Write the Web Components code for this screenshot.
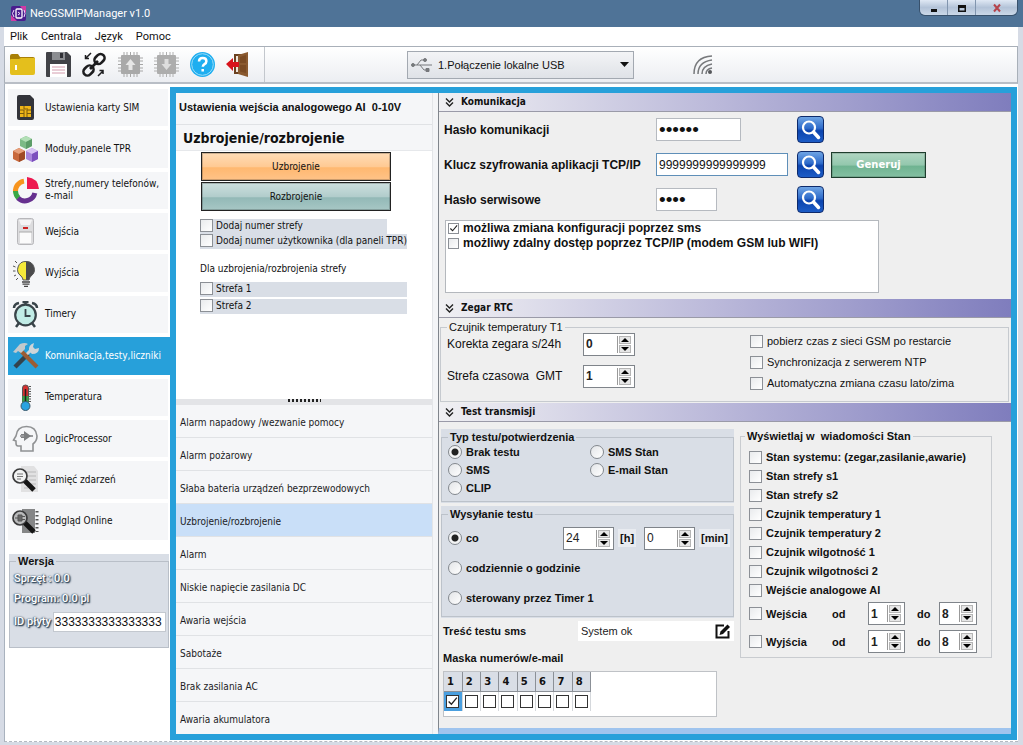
<!DOCTYPE html>
<html lang="pl">
<head>
<meta charset="utf-8">
<title>NeoGSMIPManager v1.0</title>
<style>
  html, body { margin: 0; }
  body {
    background: #d6dbe5;
    color: #111;
    font: 10px/12px "DejaVu Sans Condensed", "DejaVu Sans", sans-serif;
    --arial: "Liberation Sans", Arial, sans-serif;
    --blue: #27a0da;
    --panel: #d9dee6;
  }
</style>
</head>
<body>
<app-window></app-window>

<template id="app-window">
  <style>
    :host { display: flex; flex-direction: column; min-height: 100vh; }
    main { flex: 1; display: flex; margin: 0 5px 3px 4px; border-left: 1px solid #a9b2be; border-bottom: 1px dashed #b4bac2; background: #fff; padding-bottom: 1px; }
    .side { flex: none; width: 165px; display: flex; flex-direction: column; padding-top: 5px; box-sizing: border-box; }
    .frame { flex: 1; min-width: 0; display: flex; border: 6px solid var(--blue); margin-top: 3px; margin-right: 1px; background: #f4f5f7; }
    .left { flex: none; width: 256px; display: flex; flex-direction: column; border-right: 1px solid #e3e5e8; }
    .right { flex: 1; min-width: 0; margin-left: 5px; border-left: 1px solid #80858c; display: flex; flex-direction: column; background: #efefef; border-bottom: 6px solid #9fc4ee; }
  </style>
  <title-bar></title-bar>
  <menu-bar></menu-bar>
  <tool-bar></tool-bar>
  <main>
    <div class="side">
      <side-nav></side-nav>
      <version-panel></version-panel>
    </div>
    <div class="frame">
      <div class="left">
        <event-detail></event-detail>
        <event-list></event-list>
      </div>
      <div class="right">
        <section-panel heading="Komunikacja"><communication-form></communication-form></section-panel>
        <section-panel heading="Zegar RTC"><clock-form></clock-form></section-panel>
        <section-panel heading="Test transmisji"><transmission-form></transmission-form></section-panel>
      </div>
    </div>
  </main>
</template>

<template id="title-bar">
  <style>
    :host { display: flex; align-items: flex-start; height: 27px; background: #4f7397; color: #fff; font: 11px/27px Roboto, sans-serif; padding-left: 11px; box-sizing: border-box; }
    .logo { width: 15px; height: 15px; margin: 6px 4px 0 0; }
    .name { flex: 1; }
    .win { display: flex; height: 15px; margin-right: 5px; border: 1px solid #38516c; border-top: 0; border-radius: 0 0 6px 6px; overflow: hidden; }
    button { width: 28px; height: 15px; padding: 0; border: 0; border-right: 1px solid #8195ae; background: linear-gradient(#dfe8f4, #b3c3d8 50%, #cbd8e8); display: flex; align-items: center; justify-content: center; }
    button:last-child { border-right: 0; width: 41px; }
  </style>
  <svg class="logo" viewBox="0 0 15 15"><rect width="15" height="15" rx="2" fill="#4a1d8f"/><path d="M0 15V9l6 6zM15 0v7L9 0z" fill="#d13ba5"/><rect x="5" y="3" width="6" height="9" rx="1" fill="none" stroke="#fff" stroke-width="1.3"/><path d="M3 4L1.500 7.500 3 11M13 4l1 3.500L13 11M7 6l2 1.500L7 9" fill="none" stroke="#f5d9ff"/></svg>
  <span class="name">NeoGSMIPManager v1.0</span>
  <div class="win">
    <button aria-label="Minimalizuj"><svg width="10" height="10"><path d="M2 6h6v3H2z" fill="#111"/></svg></button>
    <button aria-label="Maksymalizuj"><svg width="10" height="10"><path d="M1 2h8v7H1zM2.500 5v2.500h5V5z" fill="#111" fill-rule="evenodd"/></svg></button>
    <button aria-label="Zamknij"><svg width="10" height="10"><path d="M2 1.500l6 7M8 1.500l-6 7" stroke="#b5444c" stroke-width="2"/></svg></button>
  </div>
</template>

<template id="menu-bar">
  <style>
    :host { display: block; background: #fff; margin: 0 5px 0 4px; }
    nav { display: flex; gap: 13px; height: 19px; padding-left: 6px; }
    a { color: #111; text-decoration: none; font: 11px/19px Roboto, sans-serif; }
  </style>
  <nav><a href="#plik">Plik</a><a href="#centrala">Centrala</a><a href="#jezyk">Język</a><a href="#pomoc">Pomoc</a></nav>
</template>

<template id="tool-bar">
  <style>
    :host { display: flex; align-items: stretch; height: 35px; margin: 0 5px 0 4px; border: 1px solid #a9b0b9; border-bottom: 2px solid #b9bec6; background: linear-gradient(#fff, #eceef2); }
    .tools { display: flex; gap: 9px; align-items: center; padding: 0 12px 0 4px; border-right: 1px solid #c3c7cd; }
    button { width: 27px; height: 27px; padding: 0; border: 0; background: none; display: block; }
    button svg { display: block; width: 27px; height: 27px; }
    .combo { align-self: center; display: flex; align-items: center; width: 227px; height: 28px; box-sizing: border-box; margin-left: 142px; padding: 0 4px 0 3px; border: 1px solid #a3a9b1; background: linear-gradient(#f3f4f6, #dfe2e7); }
    .combo svg { flex: none; pointer-events: none; }
    select { flex: 1; min-width: 0; appearance: none; border: 0; background: none; padding: 0; margin-left: 5px; height: 24px; color: #111; font: 11px "Liberation Sans", Arial, sans-serif; }
    .signal { align-self: center; margin-left: 58px; }
  </style>
  <div class="tools">
    <button aria-label="Otwórz"><svg viewBox="0 0 27 27"><path d="M1 5q0-2 2-2h6l2 3h13q2 0 2 2v4H1z" fill="#a87f06"/><path d="M1 9q0-1 1-1h8l2-1h13q1 0 1 1v14q0 2-2 2H3q-2 0-2-2z" fill="#e4bf1c"/><path d="M6 14h2v5H6z" fill="#fff"/></svg></button>
    <button aria-label="Zapisz"><svg viewBox="0 0 27 27"><path d="M1 2q0-1 1-1h20l4 4v20q0 1-1 1H2q-1 0-1-1z" fill="#414247"/><path d="M7 1h13v8H7z" fill="#8b8d91"/><path d="M15 2h3v5h-3z" fill="#303136"/><path d="M5 13h17v13H5z" fill="#fff"/><path d="M7 16h13M7 19h13M7 22h13" stroke="#d49cae"/></svg></button>
    <button aria-label="Połącz"><svg viewBox="0 0 27 27" fill="none" stroke="#1d1d1f"><g stroke-width="2.600"><rect x="14.500" y="2.500" width="8" height="11" rx="4" transform="rotate(45 18.500 8)"/><rect x="3.500" y="14" width="8" height="11" rx="4" transform="rotate(45 7.500 19.500)"/><path d="M9 18l8-8"/></g><path d="M10 2L5 7M4.500 4v3.500H8M17 25l5-5M18.500 19.500H22V23" stroke-width="1.500"/></svg></button>
    <button aria-label="Wyślij do centrali"><svg viewBox="0 0 27 27"><path d="M7 1v25M10 1v25M13.500 1v25M17 1v25M20 1v25M1 7h25M1 10h25M1 13.500h25M1 17h25M1 20h25" stroke="#a6a6a6"/><rect x="4" y="4" width="19" height="19" rx="1" fill="#a9a9a9"/><path d="M13.500 8l5 6h-3v5h-4v-5h-3z" fill="#e6e6e6"/></svg></button>
    <button aria-label="Pobierz z centrali"><svg viewBox="0 0 27 27"><path d="M7 1v25M10 1v25M13.500 1v25M17 1v25M20 1v25M1 7h25M1 10h25M1 13.500h25M1 17h25M1 20h25" stroke="#b0b0b0"/><rect x="4" y="4" width="19" height="19" rx="1" fill="#adadad"/><path d="M13.500 19l5-6h-3V8h-4v5h-3z" fill="#dedede"/></svg></button>
    <button aria-label="Pomoc"><svg viewBox="0 0 27 27"><circle cx="13.500" cy="13.500" r="12.500" fill="#1eaef0"/><circle cx="13.500" cy="13.500" r="10.800" fill="none" stroke="#9adcf8"/><path d="M10 10.500q0-3.500 3.700-3.500t3.700 3.200q0 1.800-1.900 2.900-1.700 1-1.700 2.700M13.700 18v2.600" fill="none" stroke="#fff" stroke-width="2.500"/></svg></button>
    <button aria-label="Wyjście"><svg viewBox="0 0 27 27"><path d="M9 3h11v20H9z" fill="#6b4120"/><path d="M11 5h3v16h-3z" fill="#eee6dc"/><path d="M13 4l10-3v25l-10-3z" fill="#8a5a30"/><path d="M15 6l6-2v8h-6zM15 14h6v8l-6-1.500z" fill="#7a4b24"/><path d="M1 13l7-6v4h6v5H8v4z" fill="#d8141c"/></svg></button>
  </div>
  <div class="combo">
    <svg width="22" height="18" viewBox="0 0 22 18" fill="none" stroke="#77797c"><path d="M3 9h18M6 9l4-5h3M9 9l4 5h2"/><circle cx="2" cy="9" r="1.500" fill="#77797c"/><circle cx="14" cy="4" r="1.500" fill="#77797c"/><path d="M15 12.500h3v3h-3z" fill="#77797c"/></svg>
    <select aria-label="Połączenie"><option>1.Połączenie lokalne USB</option></select>
    <svg width="9" height="5"><path d="M0 0h9L4.500 5z" fill="#111"/></svg>
  </div>
  <svg class="signal" width="22" height="22" viewBox="0 0 22 22" fill="none" stroke="#77797c" stroke-width="1.500"><path d="M2 20Q2 3 20 2M6 20Q6 8 20 6M10 20q0-8 10-10M14 20q0-5 6-6"/><circle cx="18" cy="18" r="2" fill="#55575a" stroke="none"/></svg>
</template>

<template id="side-nav">
  <style>
    :host { display: block; }
    nav { display: grid; grid-auto-rows: 1fr; row-gap: 4px; min-height: 451px; padding-left: 3px; }
  </style>
  <nav aria-label="Ustawienia">
    <nav-item>Ustawienia karty SIM<svg slot="icon" viewBox="0 0 27 27"><path d="M5 3q0-2 2-2h11l4 4v19q0 2-2 2H7q-2 0-2-2z" fill="#33343a"/><path d="M8 12h11v11H8z" fill="#efb518"/><path d="M8 16h4v7M19 16h-4v7M12 12v3h4M8 19.500h4M15 19.500h4" fill="none" stroke="#7a5b0c"/></svg></nav-item>
    <nav-item>Moduły,panele TPR<svg slot="icon" viewBox="0 0 27 27"><path d="M14 0l6 3v7l-6 3-6-3V3z" fill="#7cba86"/><path d="M14 0l6 3-6 3-6-3z" fill="#b2dfb6"/><path d="M14 6v7l6-3V3z" fill="#5c9c68"/><path d="M7 12l6 3v8l-6 3-6-3v-8z" fill="#c8693d"/><path d="M7 12l6 3-6 3-6-3z" fill="#e6a07c"/><path d="M7 18v8l6-3v-8z" fill="#a04a26"/><path d="M20 12l6 3v8l-6 3-6-3v-8z" fill="#a884dc"/><path d="M20 12l6 3-6 3-6-3z" fill="#d8c3f4"/><path d="M20 18v8l6-3v-8z" fill="#7c50bd"/></svg></nav-item>
    <nav-item>Strefy,numery telefonów,<br>e-mail<svg slot="icon" viewBox="0 0 27 27" fill="none" stroke-width="5"><path d="M3.500 15A10 10 0 0 1 12 4.100" stroke="#f7941e"/><path d="M6.500 21A10 10 0 0 1 3.500 14" stroke="#39a845"/><path d="M22.800 16A10 10 0 0 1 6 21" stroke="#66308f"/><path d="M15 0q11 1 12 12H15z" fill="#ed1850"/></svg></nav-item>
    <nav-item>Wejścia<svg slot="icon" viewBox="0 0 27 27"><rect x="5.500" y=".5" width="16" height="26" rx="2" fill="#dcdcde" stroke="#b7b7ba"/><path d="M7 2h13l-2 5H9z" fill="#f4f4f5"/><rect x="8" y="14" width="11" height="11" fill="#fbfbfb"/><path d="M7 14h13" stroke="#aaa"/><path d="M11 9h5v2h-5z" fill="#c22"/></svg></nav-item>
    <nav-item>Wyjścia<svg slot="icon" viewBox="0 0 27 27"><path d="M14 1.500A8 8 0 0 0 9 16q2 2 2 4h3z" fill="#f6ea3a"/><path d="M14 1.500A8 8 0 0 1 19 16q-2 2-2 4h-3z" fill="#4a4a4c"/><path d="M14 1.500A8 8 0 0 0 9 16q2 2 2 4h6q0-2 2-4A8 8 0 0 0 14 1.500z" fill="none" stroke="#555"/><path d="M10 22h8M10.500 24.200h7M12 26.300h4" stroke="#444" stroke-width="1.300"/><path d="M3 1l2 2M1 6l2.500 1M1 11h2.500M2 16l2-1M4 20l2-2" stroke="#555"/></svg></nav-item>
    <nav-item>Timery<svg slot="icon" viewBox="0 0 27 27" fill="none" stroke="#394449"><path d="M2 7q0-4 5-5M25 7q0-4-5-5M13.500 1v3M10.500 1h6" stroke-width="2.500"/><path d="M7 22l-3 4M20 22l3 4" stroke-width="2.500"/><circle cx="13.500" cy="14" r="10.300" fill="#c1ece6" stroke-width="2.200"/><path d="M13.500 8v7h5" stroke-width="1.800"/></svg></nav-item>
    <nav-item active>Komunikacja,testy,liczniki<svg slot="icon" viewBox="0 0 27 27"><path d="M3 25l13-13" stroke="#33434d" stroke-width="4.500"/><path d="M14 13l5-5" stroke="#cfd5d8" stroke-width="3"/><path d="M17 9q-1-6 5-8l-1 4 2 2 4-1q0 6-7 6z" fill="#cfd5d8"/><path d="M9 9l16 16" stroke="#9c5c34" stroke-width="4"/><path d="M1 10l7-8q5-2 8 0l-3 2v3l-4 4-3-2-2 2z" fill="#c3c9cc"/></svg></nav-item>
    <nav-item>Temperatura<svg slot="icon" viewBox="0 0 27 27"><path d="M10.500 4q0-3 3-3t3 3v14h-6z" fill="#d42f2f" stroke="#555"/><path d="M10.500 12h6v7h-6z" fill="#37a047"/><path d="M13.500 5v14" stroke="#222" stroke-width="1.500"/><circle cx="13.500" cy="22" r="4.500" fill="#2aa3e0" stroke="#3a586b"/><path d="M18 2v16" stroke="#555" stroke-width="2" stroke-dasharray="1 1.500"/></svg></nav-item>
    <nav-item>LogicProcessor<svg slot="icon" viewBox="0 0 27 27"><path d="M9 26v-5H6q-2 0-2-3v-2l-2.500-1L4 11Q5 1.500 14.500 1.500T25 11q0 5-4 8v7z" fill="none" stroke="#8f9193" stroke-width="1.600"/><path d="M8 11h5M17 11h4" stroke="#7d7f81" stroke-width="1.500"/><path d="M12 6l7 5-7 5V13H9v-1h3v-2H9V9h3z" fill="#7d7f81"/></svg></nav-item>
    <nav-item>Pamięć zdarzeń<svg slot="icon" viewBox="0 0 27 27"><path d="M9 0h13l4 5v21H9z" fill="#e1e1e2"/><path d="M12 6h12M16 10h8M17 14h7M19 18h5M12 22h4" stroke="#b9b9ba"/><circle cx="8" cy="10" r="7" fill="#f2f3f3" stroke="#3b3b3c" stroke-width="1.700"/><path d="M5 8h6M5 10.500h6M5 13h4" stroke="#777"/><path d="M13 15l9 9" stroke="#151515" stroke-width="5"/></svg></nav-item>
    <nav-item>Podgląd Online<svg slot="icon" viewBox="0 0 27 27"><path d="M10 1h13v24H10z" fill="#858687"/><path d="M25 3v21" stroke="#555" stroke-width="3" stroke-dasharray="1.500 2.500"/><circle cx="8" cy="10" r="7" fill="#b9babb" stroke="#3b3b3c" stroke-width="1.700"/><path d="M3 10h3M6 7h4v6H6zM10 8.500h3M10 11.500h3" fill="#666" stroke="#555"/><path d="M13 15l9 9" stroke="#151515" stroke-width="5"/></svg></nav-item>
  </nav>
</template>

<template id="nav-item">
  <style>
    :host { display: flex; background: #f5f6f8; margin-right: 2px; }
    :host([active]) { background: var(--blue); color: #fff; margin-right: 0; }
    a { flex: 1; display: flex; align-items: center; gap: 6px; padding-left: 4px; color: inherit; text-decoration: none; white-space: nowrap; }
    ::slotted(svg) { width: 27px; height: 27px; flex: none; }
  </style>
  <a href="#sekcja"><slot name="icon"></slot><span><slot></slot></span></a>
</template>

<template id="version-panel">
  <style>
    :host { display: block; background: var(--panel); margin: 14px 1px 0 4px; }
    fieldset { margin: 0; min-width: 0; border: 1px solid #b9bfc8; padding: 1px 2px 15px 4px; }
    legend { font: bold 11px/14px var(--arial); padding: 0 2px; margin-left: 2px; }
    .glow { display: block; color: #fff; font: 500 11px/20px Roboto, sans-serif; text-shadow: 1px 1px 1px #34495c, -1px 0 1px #6c8094, 1px 1px 2px #34495c, 0 0 2px #4b5d70; }
    .id { display: flex; align-items: center; gap: 2px; margin-top: 3px; }
    input { flex: 1; min-width: 0; height: 20px; box-sizing: border-box; border: 1px solid #c3c8cf; padding: 0 1px; background: #fff; color: #111; font: 12px var(--arial); }
  </style>
  <fieldset>
    <legend>Wersja</legend>
    <span class="glow">Sprzęt : 0.0</span>
    <span class="glow">Program: 0.0 pl</span>
    <div class="id"><label class="glow" for="id">ID płyty</label><input id="id" value="3333333333333333"></div>
  </fieldset>
</template>

<template id="check-item">
  <style>
    :host { display: block; }
    label { display: flex; align-items: center; gap: var(--check-gap, 4px); white-space: pre; }
    input { appearance: none; flex: none; width: var(--check, 13px); height: var(--check, 13px); box-sizing: border-box; margin: 0; border: 1px solid #8c9096; background: linear-gradient(135deg, #e9ebed, #fff); }
    input:checked { background: #fff url("data:image/svg+xml,%3Csvg xmlns='http://www.w3.org/2000/svg' viewBox='0 0 10 10'%3E%3Cpath d='M1.500 5l2.500 2.500 5-6' fill='none' stroke='%23222' stroke-width='1.200'/%3E%3C/svg%3E"); }
  </style>
  <label><input type="checkbox"><span><slot></slot></span></label>
</template>

<template id="spin-box">
  <style>
    :host { display: flex; align-items: center; gap: var(--spin-gap, 4px); }
    :host([after]) { flex-direction: row-reverse; }
    label { flex: none; width: var(--spin-label, auto); white-space: pre; }
    :host([after]) label { background: #e8ebf0; padding: 2px; }
    .box { display: flex; align-items: center; width: var(--spin-width, 51px); height: 23px; box-sizing: border-box; border: 1px solid #7f848a; background: #fff; padding: 0 3px 0 2px; }
    input { flex: 1; min-width: 0; width: 10px; appearance: textfield; border: 0; padding: 0; background: none; color: #222; font: inherit; font-size: 12px; font-weight: var(--spin-weight, normal); }
    input::-webkit-inner-spin-button { display: none; }
    .steps { display: flex; flex-direction: column; gap: 1px; border-left: 1px solid #999; padding-left: 1px; }
    button { width: 12px; height: 8px; padding: 0; border: 1px solid #b5b5b5; background: #e6e6e6; display: flex; align-items: center; justify-content: center; }
    svg { display: block; }
  </style>
  <label for="n"><slot></slot></label>
  <span class="box"><input id="n" type="number"><span class="steps"><button aria-label="Więcej"><svg width="8" height="4"><path d="M0 4h8L4 0z"/></svg></button><button aria-label="Mniej"><svg width="8" height="4"><path d="M0 0h8L4 4z"/></svg></button></span></span>
</template>

<template id="event-detail">
  <style>
    :host { display: flex; flex-direction: column; min-height: 312px; background: #fff; }
    h1 { margin: 0; padding: 0 3px; background: #f5f6f8; border-bottom: 1px solid #e0e2e5; font: bold 11px/28px var(--arial); height: 32px; box-sizing: border-box; white-space: pre; }
    h2 { margin: 0; padding: 1px 7px 0; background: #f5f6f8; border-bottom: 1px solid #e6e8eb; font-weight: bold; font-size: 14px; line-height: 24px; }
    .body { flex: 1; padding: 1px 24px 0; }
    button { display: block; width: 190px; height: 29px; margin: 0 0 1px 1px; border: 1px solid #222; box-shadow: inset 0 0 0 1px #0003; font: inherit; color: #111; }
    .arm { background: linear-gradient(#ffdcb6, #ffca94 50%, #ffb870 55%, #ffc388); }
    .disarm { background: linear-gradient(#cddfde, #b2cdcc 50%, #93b9b7 55%, #a7c7c5); }
    check-item { background: var(--panel); height: 15px; --check-gap: 3px; }
    .a { width: 187px; margin-top: 8px; }
    .b { width: max-content; }
    p { margin: 14px 0 7px; }
    .c { width: 207px; margin-bottom: 2px; }
    .split { height: 6px; background: #e3e4e7; display: flex; justify-content: center; }
    .split i { width: 33px; height: 3px; background: repeating-linear-gradient(100deg, #222 0 2px, #0000 2px 4px); }
  </style>
  <h1>Ustawienia wejścia analogowego AI  0-10V</h1>
  <h2>Uzbrojenie/rozbrojenie</h2>
  <div class="body">
    <button class="arm">Uzbrojenie</button>
    <button class="disarm">Rozbrojenie</button>
    <check-item class="a">Dodaj numer strefy</check-item>
    <check-item class="b">Dodaj numer użytkownika (dla paneli TPR)</check-item>
    <p>Dla uzbrojenia/rozbrojenia strefy</p>
    <check-item class="c">Strefa 1</check-item>
    <check-item class="c">Strefa 2</check-item>
  </div>
  <div class="split"><i></i></div>
</template>

<template id="event-list">
  <style>
    :host { display: block; flex: 1; }
    ul { list-style: none; margin: 0; padding: 0; }
    button { display: block; width: 100%; height: 33px; padding: 4px 4px 0; border: 0; border-bottom: 1px solid #e0e2e5; background: #f5f6f8; text-align: left; color: #1c1c1e; font: inherit; }
    li:last-child button { height: 32px; border-bottom: 0; }
    button[aria-current] { background: #c9dff8; }
  </style>
  <ul>
    <li><button>Alarm napadowy /wezwanie pomocy</button></li>
    <li><button>Alarm pożarowy</button></li>
    <li><button>Słaba bateria urządzeń bezprzewodowych</button></li>
    <li><button aria-current="true">Uzbrojenie/rozbrojenie</button></li>
    <li><button>Alarm</button></li>
    <li><button>Niskie napięcie zasilania DC</button></li>
    <li><button>Awaria wejścia</button></li>
    <li><button>Sabotaże</button></li>
    <li><button>Brak zasilania AC</button></li>
    <li><button>Awaria akumulatora</button></li>
  </ul>
</template>

<template id="section-panel">
  <style>
    :host { display: block; }
    h3 { display: flex; align-items: center; gap: 7px; height: 19px; box-sizing: border-box; margin: 0; padding-left: 6px; border-bottom: 1px solid #9a9aa8; background: linear-gradient(90deg, #f0f0f3, #b9b7d9 50%, #7f7dbd); font: bold 10px/18px "DejaVu Sans Condensed", "DejaVu Sans", sans-serif; }
  </style>
  <h3><svg width="9" height="9" fill="none" stroke="#222" stroke-width="1.400"><path d="M1 .5L4.500 4 8 .5M1 4.500L4.500 8 8 4.500"/></svg><span></span></h3>
  <slot></slot>
</template>

<template id="search-button">
  <style>
    :host { display: block; }
    button { display: block; width: 27px; height: 27px; padding: 0; border: 1px solid #0d2a6b; border-radius: 4px; background: linear-gradient(#6ea4e4, #2f6ccb 45%, #0c44ae 55%, #1c5cc6); }
    svg { display: block; }
  </style>
  <button aria-label="Pokaż"><svg width="25" height="25" fill="none" stroke="#fff"><circle cx="11" cy="10.500" r="6" stroke-width="2.200"/><path d="M15.500 15l5 5.500" stroke-width="3.500" stroke-linecap="round"/></svg></button>
</template>

<template id="communication-form">
  <style>
    :host { display: block; padding: 4px 5px 6px; font: bold 12px/14px var(--arial); }
    .grid { display: grid; grid-template-columns: 212px 141px 34px auto; grid-auto-rows: 27px; row-gap: 8px; align-items: center; justify-content: start; }
    .grid > * { justify-self: start; }
    input { height: 23px; box-sizing: border-box; border: 1px solid #b6bac0; background: #fff; padding: 0 2px; color: #111; font: 12px var(--arial); }
    input[type=password] { font-size: 19px; }
    .p1 { width: 85px; } .p2 { width: 132px; border-color: #5f8fb8; } .p3 { width: 61px; }
    .gen { width: 95px; height: 26px; border: 1px solid #1e3d2d; box-shadow: inset 0 0 0 1px #0002; background: linear-gradient(#b0d6c2, #93c7ad 50%, #6fb391 55%, #84c0a2); color: #fff; font: bold 10px "DejaVu Sans", sans-serif; padding: 0; }
    .box { margin: 7px 0 0 1px; width: 434px; height: 73px; box-sizing: border-box; border: 1px solid #b4b8bd; background: #fff; padding: 0 2px; --check: 11px; }
    check-item { height: 15px; }
  </style>
  <div class="grid">
    <label for="a">Hasło komunikacji</label><input id="a" class="p1" type="password" value="haslo1"><search-button></search-button><span></span>
    <label for="b">Klucz szyfrowania aplikacji TCP/IP</label><input id="b" class="p2" value="9999999999999999"><search-button></search-button><button class="gen">Generuj</button>
    <label for="c">Hasło serwisowe</label><input id="c" class="p3" type="password" value="serw"><search-button></search-button><span></span>
  </div>
  <div class="box">
    <check-item checked>możliwa zmiana konfiguracji poprzez sms</check-item>
    <check-item>możliwy zdalny dostęp poprzez TCP/IP (modem GSM lub WIFI)</check-item>
  </div>
</template>

<template id="clock-form">
  <style>
    :host { display: block; padding: 2px 2px 1px 1px; font: 11px/14px var(--arial); }
    fieldset { margin: 0; min-width: 0; border: 1px solid #c6cacf; padding: 0 6px 12px; display: flex; justify-content: space-between; }
    legend { padding: 0 2px; }
    .spins { display: grid; row-gap: 6px; margin-top: -3px; font-size: 12px; --spin-label: 136px; --spin-gap: 0; --spin-width: 52px; --spin-weight: bold; }
    .checks { display: grid; row-gap: 8px; width: 252px; align-content: start; }
    check-item { height: 13px; }
  </style>
  <fieldset>
    <legend>Czujnik temperatury T1</legend>
    <div class="spins">
      <spin-box value="0">Korekta zegara s/24h</spin-box>
      <spin-box value="1">Strefa czasowa  GMT</spin-box>
    </div>
    <div class="checks">
      <check-item>pobierz czas z sieci GSM po restarcie</check-item>
      <check-item>Synchronizacja z serwerem NTP</check-item>
      <check-item>Automatyczna zmiana czasu lato/zima</check-item>
    </div>
  </fieldset>
</template>

<template id="transmission-form">
  <style>
    :host { display: flex; gap: 6px; align-items: flex-start; padding: 7px 0 0 2px; font: bold 11px/14px var(--arial); }
    .col { width: 293px; flex: none; }
    fieldset { margin: 0; min-width: 0; padding: 0; border: 1px solid #bcc2ca; box-sizing: border-box; }
    legend { padding: 0 2px; margin-left: 6px; white-space: pre; }
    .panel { background: var(--panel); margin-bottom: 3px; padding: 1px 0 1px; }
    .radio { display: flex; align-items: center; gap: 4px; height: 14px; }
    .radio input { appearance: none; flex: none; width: 14px; height: 14px; margin: 0; border: 1px solid #83888e; border-radius: 50%; background: linear-gradient(135deg, #e3e5e8, #fff); box-sizing: border-box; }
    .radio input:checked { background: radial-gradient(#222 0 3px, #f2f3f4 4px); }
    .types { display: grid; grid-template-columns: 142px auto; row-gap: 4px; justify-content: start; padding: 1px 6px 6px; }
    .send { padding: 6px 3px 11px 6px; display: grid; row-gap: 16px; }
    .every { display: flex; align-items: center; justify-content: space-between; height: 22px; margin-bottom: -4px; }
    .every .radio { flex: 1; }
    .every spin-box { margin-left: 8px; }
    .sms { display: flex; justify-content: space-between; align-items: center; padding: 0 0 0 2px; }
    .field { display: flex; align-items: center; width: 156px; height: 20px; background: #fff; }
    .field input { flex: 1; min-width: 0; border: 0; background: none; padding: 0 3px; color: #222; font: 11px var(--arial); }
    .field button { border: 0; background: none; padding: 0 4px 0 0; }
    .field svg { display: block; }
    .mask { margin: 10px 0 6px 2px; }
    .wrap { margin: 0 0 9px 2px; width: 274px; height: 46px; box-sizing: border-box; border: 1px solid #bfc2c6; background: #fff; }
    table { border-collapse: collapse; table-layout: fixed; width: 147px; }
    th, td { height: 19px; padding: 0; }
    th { background: var(--panel); border-right: 1px solid #8b9097; border-bottom: 1px solid #8b9097; text-align: left; padding-left: 3px; font: bold 10px/12px "DejaVu Sans", sans-serif; }
    td { border-right: 1px solid #d5d8dc; padding-left: 2px; }
    td.on { background: #4a9fdf; }
    td input { appearance: none; display: block; width: 13px; height: 13px; box-sizing: border-box; margin: 0; border: 1px solid #333; background: #fff; }
    td input:checked { background: #fff url("data:image/svg+xml,%3Csvg xmlns='http://www.w3.org/2000/svg' viewBox='0 0 10 10'%3E%3Cpath d='M1.500 5l2.500 2.500 5-6' fill='none' stroke='%23222' stroke-width='1.200'/%3E%3C/svg%3E"); }
    .status { width: 252px; border-color: #c9ccd0; padding: 7px 14px 4px 8px; display: grid; row-gap: 5px; }
    .status legend { margin-left: -4px; }
    .status > check-item { height: 14px; }
    .range { display: grid; grid-template-columns: 83px 73px auto; align-items: center; height: 23px; --spin-width: 38px; --spin-weight: bold; }
    .range .od { --spin-label: 36px; --spin-gap: 0; }
    .range .do { --spin-label: 22px; --spin-gap: 0; margin-left: 12px; }
  </style>
  <div class="col">
    <div class="panel"><fieldset>
      <legend>Typ testu/potwierdzenia</legend>
      <div class="types">
        <label class="radio"><input type="radio" name="t" checked>Brak testu</label>
        <label class="radio"><input type="radio" name="t">SMS Stan</label>
        <label class="radio"><input type="radio" name="t">SMS</label>
        <label class="radio"><input type="radio" name="t">E-mail Stan</label>
        <label class="radio"><input type="radio" name="t">CLIP</label>
      </div>
    </fieldset></div>
    <div class="panel"><fieldset>
      <legend>Wysyłanie testu</legend>
      <div class="send">
        <div class="every">
          <label class="radio"><input type="radio" name="w" checked>co</label>
          <spin-box after value="24">[h]</spin-box><spin-box after value="0">[min]</spin-box>
        </div>
        <label class="radio"><input type="radio" name="w">codziennie o godzinie</label>
        <label class="radio"><input type="radio" name="w">sterowany przez Timer 1</label>
      </div>
    </fieldset></div>
    <div class="sms">
      <label for="s">Treść testu sms</label>
      <span class="field"><input id="s" value="System ok"><button aria-label="Edytuj"><svg width="15" height="15" viewBox="0 0 15 15"><path d="M9 1.500H1.500v12h12V7" fill="none" stroke="#111" stroke-width="2"/><path d="M4.500 11l1-3.500 7-7L15 3 8 10z" fill="#111"/></svg></button></span>
    </div>
    <div class="mask">Maska numerów/e-mail</div>
    <div class="wrap"><table><thead><tr></tr></thead><tbody><tr></tr></tbody></table></div>
  </div>
  <fieldset class="status">
    <legend>Wyświetlaj w  wiadomości Stan</legend>
    <check-item>Stan systemu: (zegar,zasilanie,awarie)</check-item>
    <check-item>Stan strefy s1</check-item>
    <check-item>Stan strefy s2</check-item>
    <check-item>Czujnik temperatury 1</check-item>
    <check-item>Czujnik temperatury 2</check-item>
    <check-item>Czujnik wilgotność 1</check-item>
    <check-item>Czujnik wilgotności 2</check-item>
    <check-item>Wejście analogowe AI</check-item>
    <div class="range"><check-item>Wejścia</check-item><spin-box class="od" value="1">od</spin-box><spin-box class="do" value="8">do</spin-box></div>
    <div class="range"><check-item>Wyjścia</check-item><spin-box class="od" value="1">od</spin-box><spin-box class="do" value="8">do</spin-box></div>
  </fieldset>
</template>

<script>
  class Base extends HTMLElement {
    constructor() {
      super();
      const tpl = document.getElementById(this.localName);
      this.attachShadow({ mode: "open" }).append(tpl.content.cloneNode(true));
    }
    $(selector) { return this.shadowRoot.querySelector(selector); }
  }

  class CheckItem extends Base {
    connectedCallback() { this.$("input").checked = this.hasAttribute("checked"); }
  }

  class SpinBox extends Base {
    connectedCallback() {
      const input = this.$("input");
      input.value = this.getAttribute("value");
      const [up, down] = this.shadowRoot.querySelectorAll("button");
      up.onclick = () => input.stepUp();
      down.onclick = () => input.stepDown();
    }
  }

  class SectionPanel extends Base {
    connectedCallback() { this.$("h3 span").textContent = this.getAttribute("heading"); }
  }

  class TransmissionForm extends Base {
    connectedCallback() {
      const head = this.$("thead tr"), row = this.$("tbody tr");
      for (let n = 1; n <= 8; n++) {
        head.insertAdjacentHTML("beforeend", `<th id="m${n}">${n}</th>`);
        row.insertAdjacentHTML("beforeend", `<td class="${n === 1 ? "on" : ""}"><input type="checkbox" aria-labelledby="m${n}" ${n === 1 ? "checked" : ""}></td>`);
      }
    }
  }

  customElements.define("check-item", CheckItem);
  customElements.define("spin-box", SpinBox);
  customElements.define("section-panel", SectionPanel);
  customElements.define("transmission-form", TransmissionForm);
  for (const name of ["nav-item", "search-button", "title-bar", "menu-bar", "tool-bar", "side-nav", "version-panel", "event-detail", "event-list", "communication-form", "clock-form", "app-window"])
    customElements.define(name, class extends Base {});
</script>
</body>
</html>
